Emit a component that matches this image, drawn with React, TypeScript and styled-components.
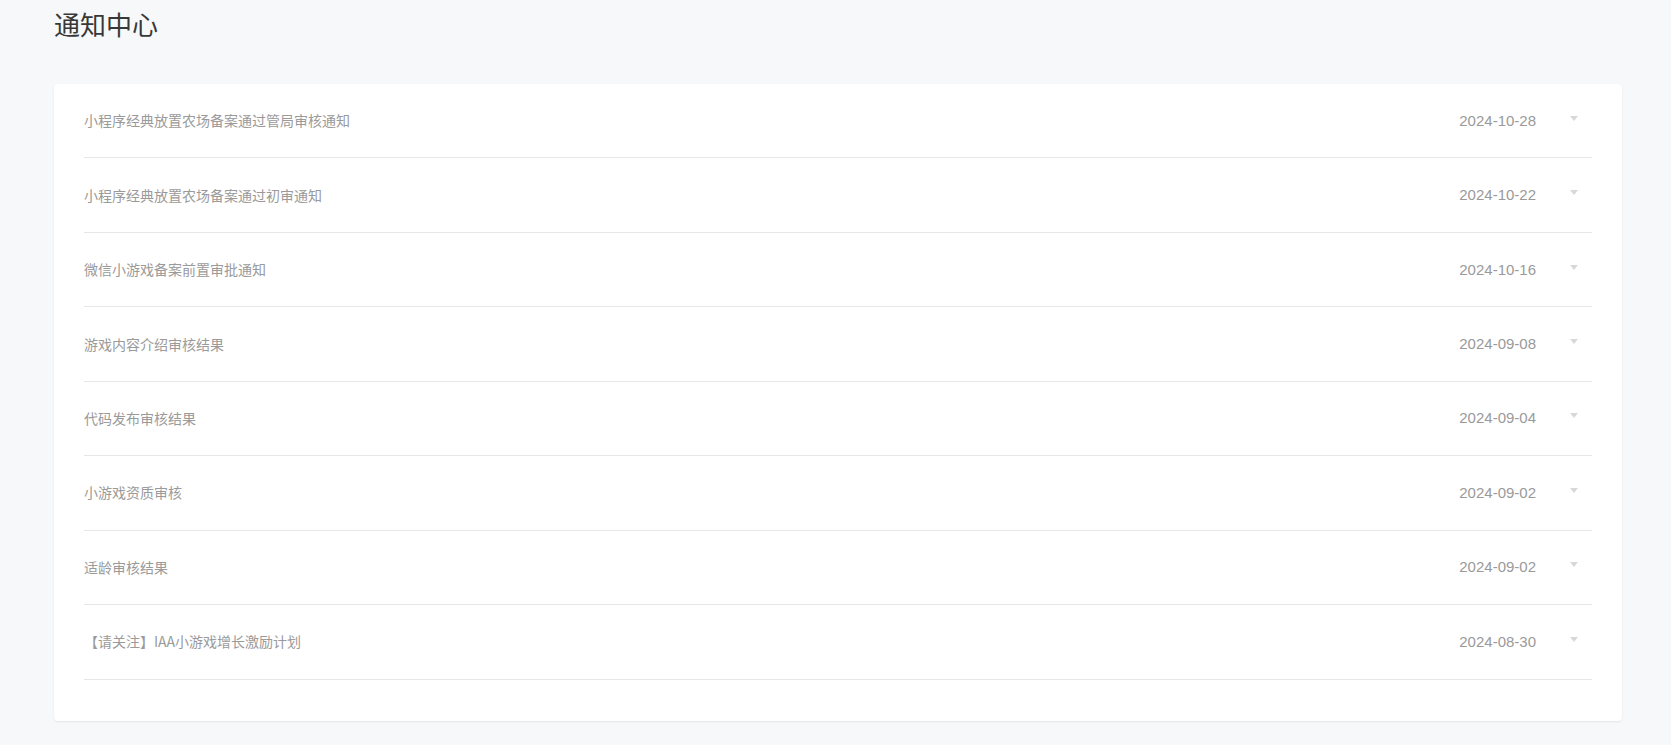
import React from 'react';
import styled, { createGlobalStyle } from 'styled-components';

const notices: NoticeItem[] = [
  { title: '小程序经典放置农场备案通过管局审核通知', date: '2024-10-28' },
  { title: '小程序经典放置农场备案通过初审通知', date: '2024-10-22' },
  { title: '微信小游戏备案前置审批通知', date: '2024-10-16' },
  { title: '游戏内容介绍审核结果', date: '2024-09-08' },
  { title: '代码发布审核结果', date: '2024-09-04' },
  { title: '小游戏资质审核', date: '2024-09-02' },
  { title: '适龄审核结果', date: '2024-09-02' },
  { title: '【请关注】IAA小游戏增长激励计划', date: '2024-08-30' },
];

const App: React.FC = () => {
  return (
    <>
      <GlobalStyle />
      <Page>
        <PageTitle>通知中心</PageTitle>
        <Card>
          {notices.map((item, i) => (
            <Row key={i}>
              <RowTitle>{item.title}</RowTitle>
              <RowDate>{item.date}</RowDate>
              <Caret viewBox="0 0 8 5" aria-hidden>
                <path d="M0 0 L8 0 L4 5 Z" />
              </Caret>
            </Row>
          ))}
        </Card>
      </Page>
    </>
  );
};

export default App;

type NoticeItem = {
  title: string;
  date: string;
};

const GlobalStyle = createGlobalStyle`
  html, body {
    margin: 0;
    padding: 0;
    background: #f7f8fa;
  }
  body {
    font-family: "Noto Sans CJK SC", "Noto Sans", sans-serif;
  }
`;

const Page = styled.div`
  min-height: 745px;
  box-sizing: border-box;
  padding: 8px 49px 26px 54px;
  background: #f7f8fa;
`;

const PageTitle = styled.h1`
  margin: 0 0 44px;
  font-size: 26px;
  line-height: 32px;
  font-weight: 400;
  color: #383838;
`;

const Card = styled.div`
  background: #fff;
  border-radius: 4px;
  padding: 0 30px 41px;
  box-shadow: 0 1px 2px rgba(0, 0, 0, 0.08);
`;

const Row = styled.div`
  display: flex;
  align-items: center;
  height: 74.44px;
  box-sizing: border-box;
  padding-bottom: 1px;
  border-bottom: 1px solid #e7e7e7;
  cursor: pointer;
`;

const RowTitle = styled.div`
  flex: 1;
  font-size: 14px;
  color: #9a9a9a;
  white-space: nowrap;
  overflow: hidden;
  text-overflow: ellipsis;
`;

const RowDate = styled.div`
  font-family: "Liberation Sans", Arial, sans-serif;
  font-size: 15px;
  color: #9a9a9a;
  margin-right: 34px;
`;

const Caret = styled.svg`
  width: 8px;
  height: 5px;
  margin-right: 14px;
  margin-top: -4px;
  fill: #d8d8d8;
`;
